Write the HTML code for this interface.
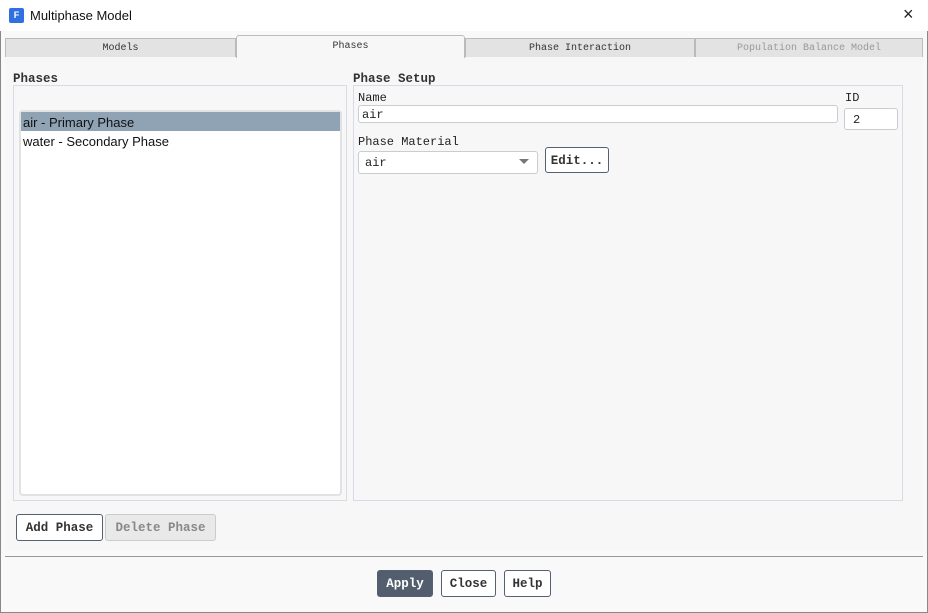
<!DOCTYPE html>
<html><head><meta charset="utf-8"><style>
*{box-sizing:border-box;margin:0;padding:0}
body{width:928px;height:613px;background:#fff;position:relative;overflow:hidden;font-family:"Liberation Mono",monospace;font-size:12px;color:#222}
.a{position:absolute}
.win{left:0;top:0;width:928px;height:613px;border:1px solid #888;border-top:none;background:#f9f9f9}
.title{left:0;top:0;width:928px;height:31px;background:#fff}
.tab{top:38px;height:19px;background:#e3e3e3;border:1px solid #bbb;border-bottom:none;font-size:10px;text-align:center;line-height:19px;color:#333}
.lbl{font-weight:bold;font-size:12.5px;color:#333}
.box{border:1px solid #d6dbe6}
.inp{background:#fff;border:1px solid #c9ccd2;border-radius:3px;font-size:12px;padding-left:3px}
.btn{border:1px solid #556070;border-radius:3px;background:#fff;font-weight:bold;font-size:12.5px;text-align:center;color:#333}
</style></head><body>
<div class="a win"></div>
<div class="a title"></div>
<div class="a" style="left:9px;top:8px;width:15px;height:15px;background:#2f6fe0;border-radius:2px;color:#fff;font:bold 9px 'Liberation Sans',sans-serif;text-align:center;line-height:15px">F</div>
<div class="a" style="left:30px;top:8px;font:13px 'Liberation Sans',sans-serif;color:#111">Multiphase Model</div>
<div class="a" style="left:903px;top:4px;font:18px 'Liberation Sans',sans-serif;color:#222">×</div>
<div class="a" style="left:5px;top:57px;width:918px;height:494px;background:#f7f7f7"></div>
<div class="a tab" style="left:5px;width:231px">Models</div>
<div class="a tab" style="left:236px;top:35px;height:23px;width:229px;background:#f7f7f7;line-height:22px;border-radius:3px 3px 0 0">Phases</div>
<div class="a tab" style="left:465px;width:230px">Phase Interaction</div>
<div class="a tab" style="left:695px;width:228px;color:#999">Population Balance Model</div>
<div class="a lbl" style="left:13px;top:72px">Phases</div>
<div class="a box" style="left:13px;top:85px;width:334px;height:416px"></div>
<div class="a" style="left:19px;top:110px;width:323px;height:386px;background:#fff;border:2px solid #e2e2e2;border-radius:4px"></div>
<div class="a" style="left:21px;top:112px;width:319px;height:19px;background:#8fa3b5"></div>
<div class="a" style="left:23px;top:115px;font:13px 'Liberation Sans',sans-serif;color:#111">air - Primary Phase</div>
<div class="a" style="left:23px;top:134px;font:13px 'Liberation Sans',sans-serif;color:#111">water - Secondary Phase</div>
<div class="a lbl" style="left:353px;top:72px">Phase Setup</div>
<div class="a box" style="left:353px;top:85px;width:550px;height:416px"></div>
<div class="a" style="left:358px;top:91px">Name</div>
<div class="a inp" style="left:358px;top:105px;width:480px;height:18px;line-height:18px">air</div>
<div class="a" style="left:845px;top:91px">ID</div>
<div class="a inp" style="left:844px;top:108px;width:54px;height:22px;line-height:22px;padding-left:8px">2</div>
<div class="a" style="left:358px;top:135px">Phase Material</div>
<div class="a inp" style="left:358px;top:151px;width:180px;height:23px;line-height:23px;padding-left:6px">air</div>
<div class="a" style="left:519px;top:159px;width:0;height:0;border-left:5px solid transparent;border-right:5px solid transparent;border-top:5px solid #777"></div>
<div class="a btn" style="left:545px;top:147px;width:64px;height:26px;line-height:26px">Edit...</div>
<div class="a btn" style="left:16px;top:514px;width:87px;height:27px;line-height:27px">Add Phase</div>
<div class="a btn" style="left:105px;top:514px;width:111px;height:27px;line-height:27px;background:#e9e9e9;border-color:#ccc;color:#888">Delete Phase</div>
<div class="a" style="left:5px;top:556px;width:918px;height:1px;background:#999"></div>
<div class="a btn" style="left:377px;top:570px;width:56px;height:27px;line-height:27px;background:#525e6e;color:#fff">Apply</div>
<div class="a btn" style="left:441px;top:570px;width:55px;height:27px;line-height:27px">Close</div>
<div class="a btn" style="left:504px;top:570px;width:47px;height:27px;line-height:27px">Help</div>
</body></html>
